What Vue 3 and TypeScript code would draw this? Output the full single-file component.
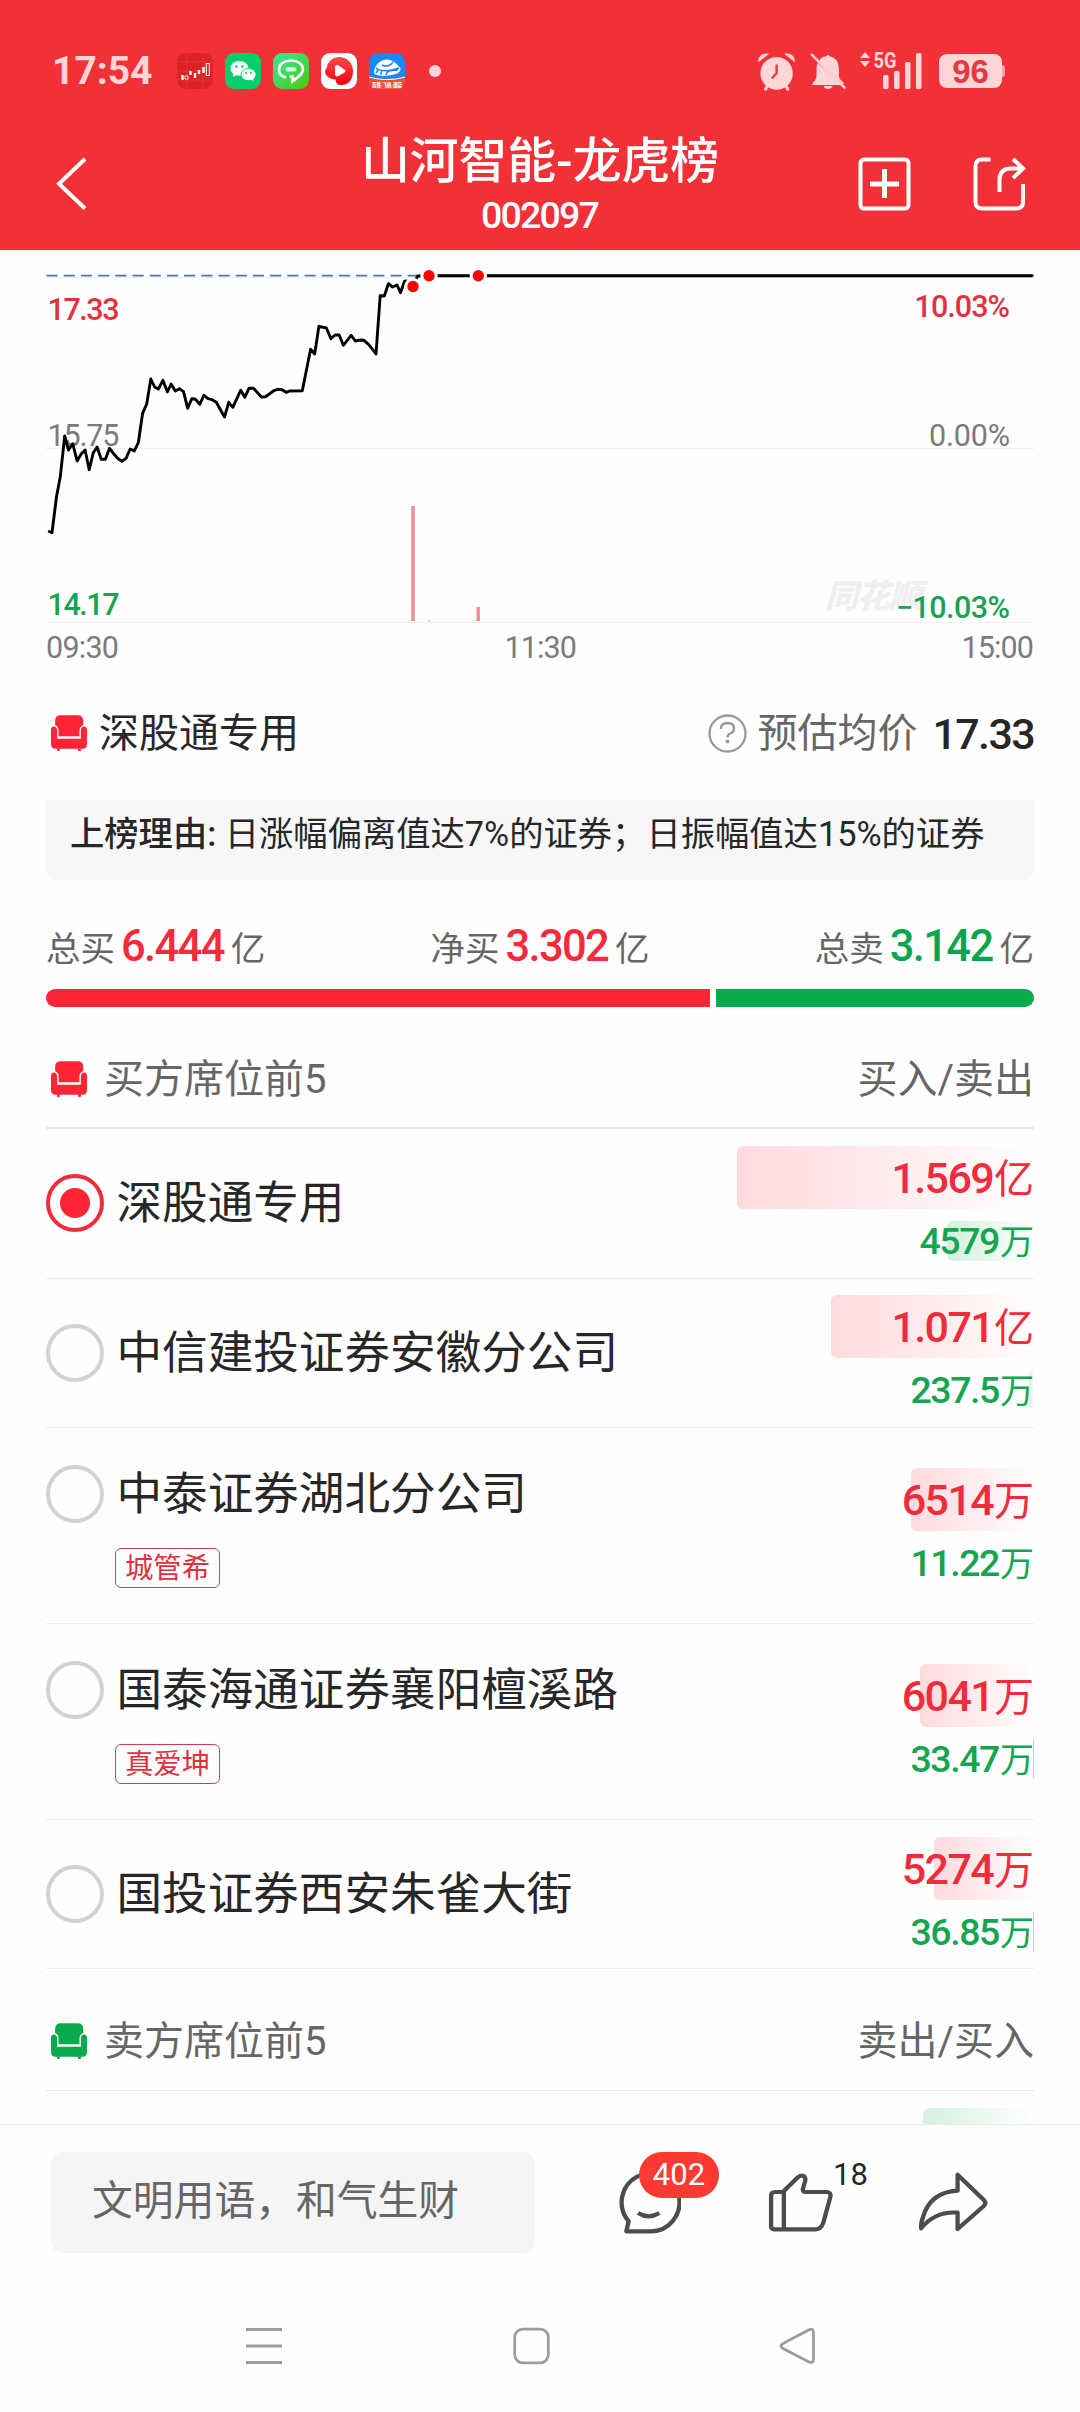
<script setup lang="ts">
interface Seat {
  name: string
  tag?: string
  checked?: boolean
  buy: string
  buyUnit: string
  buyBar: number
  sell: string
  sellUnit: string
  sellBar: number
}

const seats: Seat[] = [
  { name: '深股通专用', checked: true, buy: '1.569', buyUnit: '亿', buyBar: 297, sell: '4579', sellUnit: '万', sellBar: 87 },
  { name: '中信建投证券安徽分公司', buy: '1.071', buyUnit: '亿', buyBar: 203, sell: '237.5', sellUnit: '万', sellBar: 5 },
  { name: '中泰证券湖北分公司', tag: '城管希', buy: '6514', buyUnit: '万', buyBar: 123, sell: '11.22', sellUnit: '万', sellBar: 0 },
  { name: '国泰海通证券襄阳檀溪路', tag: '真爱坤', buy: '6041', buyUnit: '万', buyBar: 114, sell: '33.47', sellUnit: '万', sellBar: 1 },
  { name: '国投证券西安朱雀大街', buy: '5274', buyUnit: '万', buyBar: 100, sell: '36.85', sellUnit: '万', sellBar: 1 },
]

const totals = [
  { label: '总买', value: '6.444', tone: 'up' },
  { label: '净买', value: '3.302', tone: 'up' },
  { label: '总卖', value: '3.142', tone: 'down' },
]

// Intraday price samples: x in 1/2.904 px, y in 1/3 px
const samples: [number, number][] = [
  [140, 843], [151, 848], [164, 740], [175, 680], [188, 558], [199, 600], [211, 581], [224, 633], [236, 611], [247, 600],
  [259, 659], [271, 608], [282, 591], [294, 628], [306, 628], [318, 595], [330, 611], [343, 626], [354, 634], [366, 625],
  [378, 597], [390, 603], [402, 577], [414, 490], [426, 462], [438, 387], [449, 411], [460, 417], [473, 391], [486, 426],
  [497, 402], [509, 423], [521, 416], [533, 425], [545, 475], [557, 446], [568, 448], [580, 463], [592, 436], [604, 446],
  [616, 449], [628, 457], [652, 501], [664, 457], [676, 472], [699, 421], [711, 442], [723, 415], [736, 415], [759, 441],
  [771, 440], [795, 422], [806, 418], [819, 419], [831, 427], [841, 423], [878, 422], [902, 298], [914, 312], [926, 229],
  [948, 234], [961, 266], [973, 255], [985, 255], [997, 286], [1020, 256], [1032, 273], [1046, 270], [1057, 271], [1070, 283],
  [1082, 298], [1092, 312], [1104, 137], [1116, 138], [1128, 101], [1140, 111], [1153, 105], [1163, 128], [1175, 94], [1180, 93],
  [1199, 109], [1212, 79], [1222, 77], [2999, 77],
]
const pricePath = samples.map(([x, y]) => `${(x / 2.904).toFixed(1)},${(y / 3).toFixed(1)}`).join(' ')

const marks = [
  { x: 413, y: 36.5 },
  { x: 429, y: 25.7 },
  { x: 478.3, y: 25.7 },
]
</script>

<template>
  <div class="page">
    <header class="top">
      <div class="status">
        <span class="time">17:54</span>
        <div class="apps">
          <svg width="36" height="36" viewBox="0 0 36 36">
            <rect width="36" height="36" rx="9" fill="#dd2226" />
            <path d="M10 0V36M26 0V36M0 9H36M0 18H36M0 27H36" stroke="#e4383c" stroke-width=".7" />
            <path d="M5.500 22v5M13.500 18v4M18 20v5M22 17v4M26.500 14v6" stroke="#fff" stroke-width="2.400" />
            <circle cx="9.500" cy="24.500" r="1.800" fill="none" stroke="#fff" />
            <rect x="29.300" y="10.500" width="3" height="12" fill="none" stroke="#fff" />
          </svg>
          <svg width="36" height="36" viewBox="0 0 36 36">
            <rect width="36" height="36" rx="9" fill="#06cf69" />
            <path d="M14.500 8C9.500 8 5.500 11.200 5.500 15.400c0 2.300 1.200 4.200 3 5.500L7.800 24l3.300-1.800c1 .3 2.200.5 3.400.5 5 0 9-3.200 9-7.300S19.500 8 14.500 8Z" fill="#fff" />
            <path d="M23.500 15.500c4.200 0 7.500 2.700 7.500 6.100 0 1.900-1 3.500-2.500 4.600l.6 2.500-2.700-1.500c-.9.3-1.900.4-2.900.4-4.200 0-7.500-2.600-7.500-6s3.300-6.100 7.500-6.100Z" fill="#fff" stroke="#06cf69" stroke-width=".9" />
            <g fill="#06c563"><circle cx="11.500" cy="13.500" r="1.200" /><circle cx="17.500" cy="13.500" r="1.200" /><circle cx="21" cy="20" r="1" /><circle cx="26" cy="20" r="1" /></g>
          </svg>
          <svg width="36" height="36" viewBox="0 0 36 36">
            <defs><linearGradient id="chatBg" x1="0" y1="0" x2="1" y2="1"><stop offset="0" stop-color="#38e89c" /><stop offset="1" stop-color="#4fc80c" /></linearGradient></defs>
            <rect width="36" height="36" rx="9" fill="url(#chatBg)" />
            <path d="M13 24.500C8.500 23.500 6 20.500 6 16.500 6 11 11 7.500 18 7.500s12 3.500 12 9c0 4.500-4.500 7-10.500 12V23.500H16.500" fill="none" stroke="#fff" stroke-width="2.600" />
            <rect x="12.500" y="14.200" width="11" height="4.400" rx="2" fill="#d9ffe0" />
          </svg>
          <svg width="36" height="36" viewBox="0 0 36 36">
            <defs><linearGradient id="playBg" x1="0" y1="0" x2="0" y2="1"><stop offset="0" stop-color="#ff4b4b" /><stop offset="1" stop-color="#f5000e" /></linearGradient></defs>
            <rect width="36" height="36" rx="9" fill="#fff" />
            <path d="M18 4c8 0 14 6 14 14s-4 14-12 14c-4 0-5-2-5.500-5.500C8 26 4 22.500 4 18.500 4 16 6 15.500 6 13.500 7.500 8 12 4 18 4Z" fill="url(#playBg)" />
            <path d="M14 14.500c0-2.500 1.500-3 3.500-2l6 4c1.300 1 1.300 2.200 0 3l-6 3.500c-2 1-3.500.3-3.500-2Z" fill="#fff" />
          </svg>
          <svg width="36" height="36" viewBox="0 0 36 36">
            <defs><clipPath id="trainClip"><rect width="36" height="36" rx="9" /></clipPath></defs>
            <g clip-path="url(#trainClip)">
              <rect width="36" height="36" fill="#1f86f8" />
              <path d="M0 24Q18 29 36 24V36H0Z" fill="#f4502f" />
              <path d="M0 24.200Q18 29 36 24.200" fill="none" stroke="#fff" stroke-width="1" />
              <path d="M5 19C6 11 12 6 19 6.500c5 .8 9 4.500 12.500 8.700.6 2.800-2 5.300-6.500 6.300-6 1-12 2.500-17 .5-2-.8-3-1.500-3-3Z" fill="#fff" />
              <path d="M13 12c4 2 8 1 11-3M7 15c3 3 12 4 23 0M17 22c0-3 3-5 12-5M9 17l-2 3M13 18l-1.500 4" fill="none" stroke="#1f86f8" stroke-width="1.500" />
            </g>
            <text x="18" y="33.500" text-anchor="middle" font-size="5.400" font-weight="900" fill="#fff" textLength="30" lengthAdjust="spacingAndGlyphs">高铁·飞机·酒店</text>
          </svg>
        </div>
        <i class="dot" />
        <div class="sys">
          <svg width="38" height="39" viewBox="630 150 110.400 117" preserveAspectRatio="none">
            <g fill="#ffd5d7">
              <ellipse cx="687" cy="214" rx="47" ry="49" />
              <path d="M634 181C632 163 645 151 665 155ZM740 181C742 163 729 151 709 155Z" />
              <path d="M658 247L664 251 659 265Q650 269 650 260ZM716 247L710 251 715 265Q724 269 724 260Z" />
            </g>
            <path d="M687 190V213L675 227" fill="none" stroke="#e73a42" stroke-width="7" stroke-linecap="round" stroke-linejoin="round" />
          </svg>
          <svg width="36" height="37" viewBox="784 153 104.500 111" preserveAspectRatio="none">
            <path d="M806 182L874 249H790Q790 242 798 236 803 230 803 218V205Q802 191 806 182Z" fill="#ffd5d7" />
            <path d="M814 170Q821 164 831 163 836 155 841 163 868 169 868 202V220Q868 229 873 234L883 243Q882 247 879 247L811 177Z" fill="#ffd5d7" />
            <path d="M823 252H850Q846 261 837 261 827 261 823 252Z" fill="#ffd5d7" />
            <path d="M789 158L884 257" stroke="#ffd5d7" stroke-width="7" stroke-linecap="round" />
          </svg>
          <svg class="signal" width="62" height="38" viewBox="0 0 62 38">
            <g fill="#ffd5d7">
              <path d="M5 0L10 6H0ZM5 15L10 9H0Z" />
              <text x="13.500" y="16" font-size="21.500" font-weight="700" textLength="23" lengthAdjust="spacingAndGlyphs">5G</text>
              <rect x="23" y="23" width="5.500" height="14" rx="1.500" /><rect x="34" y="19" width="5.500" height="18" rx="1.500" />
              <rect x="45" y="10" width="5.500" height="27" rx="1.500" /><rect x="56" y="1" width="5.500" height="36" rx="1.500" />
            </g>
          </svg>
          <span class="battery">96</span>
        </div>
      </div>
      <div class="nav">
        <svg width="31" height="54" viewBox="0 0 31 54"><path d="M29 2L3 26.800 29 51.500" fill="none" stroke="#fff" stroke-width="4" /></svg>
        <div class="title">
          <h1>山河智能-龙虎榜</h1>
          <p>002097</p>
        </div>
        <div class="actions">
          <svg width="53" height="54" viewBox="0 0 53 54" fill="none" stroke="#fff" stroke-width="4">
            <rect x="2.500" y="2.500" width="48" height="49" rx="3.500" /><path d="M12 27H41M26.500 12V41" stroke-width="5" />
          </svg>
          <svg width="53" height="54" viewBox="0 0 53 54" fill="none" stroke="#fff" stroke-width="4">
            <path d="M17.500 2.500H9Q2.500 2.500 2.500 9V45Q2.500 51.500 9 51.500H43Q50 51.500 50 45V27" />
            <path d="M26.500 35V23Q26.500 11.500 38 11.500H49M40 2L50 11.500 40 21" />
          </svg>
        </div>
      </div>
    </header>

    <main class="content">
      <svg class="chart" width="1080" height="420" viewBox="0 0 1080 420">
        <path d="M0 .5H1080" stroke="#ffedf0" />
        <path d="M46 27.500H1034M46 198.500H1034M46 372.500H1034" stroke="#efefef" />
        <text class="mark" x="825" y="358" textLength="97">同花顺</text>
        <path d="M46.500 25.700H1034" stroke="#4f76ae" stroke-width="1.800" stroke-dasharray="11.200 6" />
        <g class="axis">
          <text class="up" x="47.500" y="69.700" textLength="72">17.33</text>
          <text x="47.500" y="195.500" textLength="72">15.75</text>
          <text class="down" x="47.500" y="365" textLength="72">14.17</text>
          <text class="up" x="914.500" y="67" textLength="95.500">10.03%</text>
          <text x="929" y="195.500" textLength="81">0.00%</text>
          <text class="down" x="896" y="367.700" textLength="114">−10.03%</text>
          <text x="46" y="408.300" textLength="73">09:30</text>
          <text x="504.500" y="408.300" textLength="72.500">11:30</text>
          <text x="961.500" y="408.300" textLength="72.500">15:00</text>
        </g>
        <polyline :points="pricePath" fill="none" stroke="#000" stroke-width="2.900" stroke-linejoin="round" />
        <path d="M411.200 256h3.600v115h-3.600zM476.500 357h3.400v14h-3.400z" fill="#ee8d96" />
        <path d="M427.500 370h3.500v1.500h-3.500z" fill="#f7c6cb" />
        <circle v-for="m in marks" :key="m.x" :cx="m.x" :cy="m.y" r="7.200" fill="#f00" stroke="#fff" stroke-width="3" />
      </svg>

      <section class="summary">
        <svg class="sofa up" width="36" height="36"><use href="#sofa" /></svg>
        <span class="seat">深股通专用</span>
        <svg class="help" width="39" height="39" viewBox="0 0 39 39" fill="none" stroke="#999" stroke-width="2.300">
          <circle cx="19.500" cy="19.500" r="18" /><path d="M12.800 15Q13 9 19.500 9 26 9.200 26 14.500 26 18 22.300 19.500 19.500 20.500 19.500 23.500" /><circle cx="19.500" cy="27.500" r="2" fill="#999" stroke="none" />
        </svg>
        <span class="avg-label">预估均价</span>
        <b class="avg">17.33</b>
      </section>

      <p class="reason"><b>上榜理由:</b> 日涨幅偏离值达7%的证券；日振幅值达15%的证券</p>

      <section class="totals">
        <div v-for="t in totals" :key="t.label" class="total">
          <span>{{ t.label }}</span><b :class="t.tone">{{ t.value }}</b><span>亿</span>
        </div>
      </section>
      <div class="ratio"><i class="buy" /><i class="sell" /></div>

      <section class="group first">
        <svg class="sofa up" width="36" height="36" viewBox="148 104 105 109" preserveAspectRatio="none">
          <g id="sofa-shape">
            <path fill="currentColor" d="M160 134V122Q160 105 176 105H226Q242 105 242 122V134Q231 139 231 150V168H170V150Q170 139 160 134Z" />
            <path fill="currentColor" d="M148 150Q148 139 156 139 165 139 166 150V176H235V150Q236 139 245 139 253 139 253 150V190Q253 206 240 206H235V213H227V206H173V213H166V206H161Q148 206 148 190Z" />
          </g>
          <symbol id="sofa" viewBox="148 104 105 109" preserveAspectRatio="none"><use href="#sofa-shape" /></symbol>
        </svg>
        <span>买方席位前5</span>
        <span class="cols">买入/卖出</span>
      </section>

      <div v-for="s in seats" :key="s.name" class="row" :class="{ tall: s.tag }">
        <div class="who">
          <div class="head">
            <i class="radio" :class="{ on: s.checked }" />
            <span class="name">{{ s.name }}</span>
          </div>
          <span v-if="s.tag" class="tag">{{ s.tag }}</span>
        </div>
        <div class="amounts">
          <div class="amount in">
            <i class="bar" :style="{ width: s.buyBar + 'px' }" />
            <b>{{ s.buy }}</b><span>{{ s.buyUnit }}</span>
          </div>
          <div class="amount out">
            <i class="bar" :class="{ thin: s.sellBar === 1 }" :style="{ width: s.sellBar + 'px' }" />
            <b>{{ s.sell }}</b><span>{{ s.sellUnit }}</span>
          </div>
        </div>
      </div>

      <section class="group">
        <svg class="sofa down" width="36" height="36"><use href="#sofa" /></svg>
        <span>卖方席位前5</span>
        <span class="cols">卖出/买入</span>
      </section>
      <div class="peek"><i /></div>
    </main>

    <footer class="bottom">
      <div class="tools">
        <div class="input">文明用语，和气生财</div>
        <div class="tool comment">
          <svg width="64" height="64" viewBox="225 182 185.900 192" preserveAspectRatio="none" fill="none" stroke="#4c4c4c" stroke-width="12.500" stroke-linejoin="round">
            <path d="M252 363L259 333A84 87 0 1 1 320 363Z" /><path d="M286 308Q317 328 348 308" />
          </svg>
          <span class="badge">402</span>
        </div>
        <div class="tool like">
          <svg width="66" height="64" viewBox="663 182 191.700 192" preserveAspectRatio="none" fill="none" stroke="#4c4c4c" stroke-width="12.500" stroke-linejoin="round">
            <path d="M672 257Q672 245 683 245H706L750 201Q758 192 768 198 773 204 771 212L764 237Q764 245 772 245H834Q847 246 844 260L824 336Q818 357 802 357H682Q672 357 672 347Z" /><path d="M709 245V357" />
          </svg>
          <span class="count">18</span>
        </div>
        <svg class="share" width="71" height="64" viewBox="1098 182 206.200 192" preserveAspectRatio="none" fill="none" stroke="#4c4c4c" stroke-width="12.500" stroke-linejoin="round">
          <path d="M1213 193L1290 270Q1297 278 1290 286L1213 356V307Q1148 302 1107 354 1106 338 1111 325 1132 245 1213 241Z" />
        </svg>
      </div>
      <div class="keys">
        <svg width="36" height="38" viewBox="0 0 36 38" stroke="#9c9c9c" stroke-width="3.200"><path d="M0 2.500H36M0 19H36M0 35.500H36" /></svg>
        <svg width="37" height="38" viewBox="0 0 37 38" fill="none" stroke="#9c9c9c" stroke-width="2.800"><rect x="1.700" y="2.200" width="33.600" height="33.600" rx="8" /></svg>
        <svg width="37" height="38" viewBox="0 0 37 38" fill="none" stroke="#9c9c9c" stroke-width="2.800"><path d="M30 2.700L4 16.500Q0 19 4 21.500L30 35Q34.500 36.500 34.500 32V6Q34.500 1 30 2.700Z" /></svg>
      </div>
    </footer>
  </div>
</template>

<style>
body { margin: 0; background: #fefefe; }
</style>

<style scoped>
.page {
  width: 1080px;
  height: 2412px;
  display: flex;
  flex-direction: column;
  overflow: hidden;
  background: #fefefe;
  color: #272727;
  font-family: Roboto, "Noto Sans CJK SC", sans-serif;
}
svg { display: block; flex: none; }
h1, p { margin: 0; }
i { display: block; flex: none; }
.up { color: #f52b3c; }
.down { color: #0aa64d; }

.top { height: 250px; flex: none; background: #f23037; color: #fff; }
.status {
  height: 117px;
  box-sizing: border-box;
  padding: 25px 75px 0 52px;
  display: flex;
  align-items: center;
}
.time { width: 125px; font-size: 39px; line-height: 46px; font-weight: 700; color: #ffd5d7; }
.apps { display: flex; gap: 12px; }
.dot { width: 12px; height: 12px; border-radius: 50%; background: #ffd5d7; margin-left: 24px; }
.sys { margin-left: auto; display: flex; align-items: center; }
.sys svg + svg { margin-left: 14.500px; }
.signal { overflow: visible; }
.battery {
  position: relative;
  width: 63px;
  height: 34px;
  margin: 0 3px 0 17px;
  border-radius: 8px;
  background: #ffd5d7;
  color: #e23a41;
  font: 700 33px/36px "Liberation Sans", sans-serif;
  text-align: center;
}
.battery::after {
  content: "";
  position: absolute;
  left: 63px;
  top: 11px;
  width: 3px;
  height: 12px;
  border-radius: 0 3px 3px 0;
  background: #f9a3a8;
}
.nav {
  height: 133px;
  padding: 0 54px 0 56px;
  display: grid;
  grid-template-columns: 1fr auto 1fr;
  align-items: center;
}
.title { padding: 6px 2px 0 0; text-align: center; }
h1 { font-size: 48.800px; line-height: 56px; font-weight: 500; }
.title p { margin-right: 1px; font-size: 37.500px; line-height: 50px; font-weight: 500; letter-spacing: -0.048em; }
.actions { display: flex; justify-content: flex-end; gap: 62px; }

.content { flex: 1; min-height: 0; overflow: hidden; }
.axis { font-size: 30.500px; fill: #7b7b7b; }
.axis .up { fill: #e5303f; font-weight: 500; }
.axis .down { fill: #16a452; font-weight: 500; }
.mark { font-size: 33px; font-weight: 900; font-style: italic; fill: #efefef; }

.summary { height: 126px; padding: 0 46px 0 51px; display: flex; align-items: center; font-size: 40px; line-height: 50px; }
.seat { padding-top: 2px; margin-left: 12px; margin-right: auto; }
.help { margin-right: 10px; }
.avg-label { padding-top: 2px; color: #666; }
.avg { margin-left: 15px; padding-top: 1px; font-size: 43px; font-weight: 500; letter-spacing: -0.038em; }

.reason {
  height: 80px;
  box-sizing: border-box;
  margin: 4px 46px 0;
  padding: 11px 24px 0;
  border-radius: 0 0 12px 12px;
  background: #f7f7f7;
  font-size: 34.300px;
  line-height: 46px;
  white-space: nowrap;
}
.reason b { font-weight: 500; }

.totals { height: 58px; margin: 38px 46px 0; display: flex; justify-content: space-between; line-height: 58px; }
.total { display: flex; align-items: baseline; font-size: 34.500px; color: #666; }
.total b { margin: 0 7px 0 6px; font-size: 43.500px; font-weight: 500; letter-spacing: -0.038em; }
.total b.up { color: #f52b3c; }
.total b.down { color: #0aa64d; }
.ratio { margin: 13px 46px 0; height: 18px; display: flex; gap: 6px; }
.ratio .buy { width: 664px; border-radius: 9px 0 0 9px; background: #ff2536; }
.ratio .sell { flex: 1; border-radius: 0 9px 9px 0; background: #09aa4c; }

.group {
  height: 96px;
  margin: 25px 46px 0;
  padding: 0 0 0 5px;
  display: flex;
  align-items: center;
  border-bottom: 1px solid #e8e8e8;
  font-size: 40px;
  line-height: 50px;
  color: #666;
}
.group.first { height: 95px; border-bottom-width: 2px; }
.group span { margin-left: 17px; }
.group .cols { margin-left: auto; }
.group .sofa { margin-bottom: 2px; }
.sofa.up { color: #ff2536; }
.sofa.down { color: #09aa4c; }

.row {
  height: 149.600px;
  box-sizing: border-box;
  margin: 0 46px;
  display: flex;
  align-items: center;
  justify-content: space-between;
  border-bottom: 1px solid #ededed;
}
.row.tall { height: 195.800px; }
.head { height: 58px; display: flex; align-items: center; }
.radio { width: 58px; height: 58px; box-sizing: border-box; border: 4px solid #d2d2d2; border-radius: 50%; }
.radio.on { border-color: #f22c3c; background: radial-gradient(circle, #ff2536 14.500px, #fff 15.500px); }
.name { padding-top: 2px; margin-left: 12.500px; font-size: 45.600px; line-height: 58px; }
.tag {
  display: block;
  width: 105px;
  height: 40px;
  box-sizing: border-box;
  margin: 25px 0 -2px 69px;
  border: 1px solid #c9404c;
  border-radius: 6px;
  color: #e2303e;
  font-size: 28.400px;
  line-height: 39px;
  text-align: center;
  white-space: nowrap;
}
.amounts { display: flex; flex-direction: column; gap: 12px; }
.amount { position: relative; display: flex; justify-content: flex-end; align-items: baseline; white-space: nowrap; }
.amount b, .amount span { position: relative; }
.amount b { font-weight: 500; letter-spacing: -0.038em; }
.bar { position: absolute; right: 0; top: 0; height: 100%; border-radius: 6px 0 0 6px; }
.in { height: 63px; line-height: 64px; color: #ef2c3c; }
.in b { font-size: 43px; }
.in span { font-size: 40px; margin-left: 1px; }
.in .bar { background: linear-gradient(90deg, #ffdadd, #fffdfd); }
.out { height: 40px; line-height: 41px; color: #14a550; }
.out b { font-size: 37.500px; }
.out span { font-size: 34px; margin-left: 1px; }
.out .bar { background: linear-gradient(90deg, #d3f1dc, #fdfffd); }
.out .bar.thin { background: #b3dfc2; border-radius: 0; }

.peek { margin: 17px 46px 0; }
.peek i { width: 111px; height: 63px; margin-left: auto; border-radius: 6px 0 0 0; background: linear-gradient(90deg, #d6f2de, #fdfffd); }

.bottom { position: relative; height: 287px; flex: none; border-top: 1px solid #e8e8e8; background: #fefefe; }
.tools { padding: 27px 0 0 51px; height: 101px; display: flex; align-items: center; }
.input {
  width: 484px;
  height: 101px;
  box-sizing: border-box;
  padding-left: 41px;
  border-radius: 12px;
  background: #f5f5f5;
  color: #666;
  font-size: 40.800px;
  line-height: 98px;
}
.tool { position: relative; }
.comment { margin-left: 82px; }
.like { margin-left: 87px; }
.share { margin-left: 84px; }
.badge {
  position: absolute;
  left: 22px;
  top: -19px;
  width: 80px;
  height: 46px;
  border-radius: 23px;
  background: #fb3b32;
  color: #fff;
  font-size: 31px;
  line-height: 46px;
  text-align: center;
}
.count { position: absolute; left: 65px; top: -19px; font-size: 31px; line-height: 46px; }
.keys { margin-top: 74px; padding-left: 246px; display: flex; }
.keys svg:nth-child(2) { margin-left: 231px; }
.keys svg:nth-child(3) { margin-left: 229px; }
</style>
